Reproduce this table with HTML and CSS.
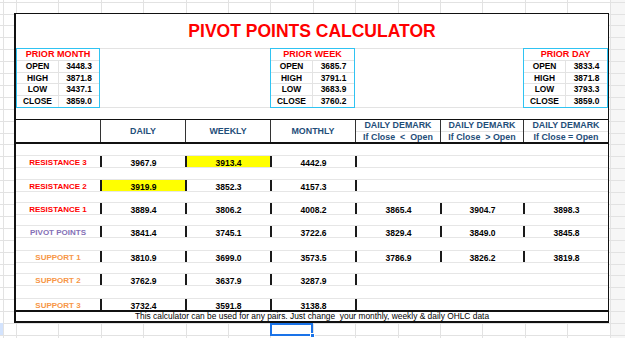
FILE: index.html
```html
<!DOCTYPE html>
<html>
<head>
<meta charset="utf-8">
<link rel="stylesheet" href="styles.css">
</head>
<body>
<div class="sheet">
  <div class="calc">
    <div class="title">PIVOT POINTS CALCULATOR</div>
    <div class="boxes">
      <div class="box box-month">
        <div class="box-h">PRIOR MONTH</div>
        <div class="box-l">OPEN</div><div class="box-v">3448.3</div>
        <div class="box-l">HIGH</div><div class="box-v">3871.8</div>
        <div class="box-l">LOW</div><div class="box-v">3437.1</div>
        <div class="box-l">CLOSE</div><div class="box-v">3859.0</div>
      </div>
      <div class="box box-week">
        <div class="box-h">PRIOR WEEK</div>
        <div class="box-l">OPEN</div><div class="box-v">3685.7</div>
        <div class="box-l">HIGH</div><div class="box-v">3791.1</div>
        <div class="box-l">LOW</div><div class="box-v">3683.9</div>
        <div class="box-l">CLOSE</div><div class="box-v">3760.2</div>
      </div>
      <div class="box box-day">
        <div class="box-h">PRIOR DAY</div>
        <div class="box-l">OPEN</div><div class="box-v">3833.4</div>
        <div class="box-l">HIGH</div><div class="box-v">3871.8</div>
        <div class="box-l">LOW</div><div class="box-v">3793.3</div>
        <div class="box-l">CLOSE</div><div class="box-v">3859.0</div>
      </div>
    </div>
    <div class="gap"></div>
    <div class="head">
      <div class="hc hc-first"></div>
      <div class="hc">DAILY</div>
      <div class="hc">WEEKLY</div>
      <div class="hc">MONTHLY</div>
      <div class="hc dm"><span class="dm-a">DAILY DEMARK</span><span class="dm-b">If Close  &lt;  Open</span></div>
      <div class="hc dm"><span class="dm-a">DAILY DEMARK</span><span class="dm-b">If Close  &gt; Open</span></div>
      <div class="hc dm"><span class="dm-a">DAILY DEMARK</span><span class="dm-b">If Close = Open</span></div>
    </div>
    <div class="row h11 first"></div>
    <div class="row h12">
      <div class="lbl red">RESISTANCE 3</div>
      <div class="c">3967.9</div>
      <div class="c hl">3913.4</div>
      <div class="c">4442.9</div>
      <div class="c rest"></div>
    </div>
    <div class="row h12"></div>
    <div class="row h12">
      <div class="lbl red">RESISTANCE 2</div>
      <div class="c hl">3919.9</div>
      <div class="c">3852.3</div>
      <div class="c">4157.3</div>
      <div class="c rest"></div>
    </div>
    <div class="row h11"></div>
    <div class="row h12">
      <div class="lbl red">RESISTANCE 1</div>
      <div class="c">3889.4</div>
      <div class="c">3806.2</div>
      <div class="c">4008.2</div>
      <div class="c">3865.4</div>
      <div class="c">3904.7</div>
      <div class="c">3898.3</div>
    </div>
    <div class="row h11"></div>
    <div class="row h12">
      <div class="lbl purple">PIVOT POINTS</div>
      <div class="c">3841.4</div>
      <div class="c">3745.1</div>
      <div class="c">3722.6</div>
      <div class="c">3829.4</div>
      <div class="c">3849.0</div>
      <div class="c">3845.8</div>
    </div>
    <div class="row h13"></div>
    <div class="row h12">
      <div class="lbl orange">SUPPORT 1</div>
      <div class="c">3810.9</div>
      <div class="c">3699.0</div>
      <div class="c">3573.5</div>
      <div class="c">3786.9</div>
      <div class="c">3826.2</div>
      <div class="c">3819.8</div>
    </div>
    <div class="row h11"></div>
    <div class="row h12">
      <div class="lbl orange">SUPPORT 2</div>
      <div class="c">3762.9</div>
      <div class="c">3637.9</div>
      <div class="c">3287.9</div>
      <div class="c rest"></div>
    </div>
    <div class="row h13"></div>
    <div class="row h12">
      <div class="lbl orange">SUPPORT 3</div>
      <div class="c">3732.4</div>
      <div class="c">3591.8</div>
      <div class="c">3138.8</div>
      <div class="c rest"></div>
    </div>
    <div class="foot">This calculator can be used for any pairs. Just change  your monthly, weekly &amp; daily OHLC data</div>
  </div>
  <div class="rowsel"></div>
  <div class="sel"><div class="dot"></div></div>
</div>
</body>
</html>
```
FILE: styles.css
```css
* { box-sizing: border-box; }
html, body { margin: 0; padding: 0; }
body {
  width: 625px;
  height: 338px;
  overflow: hidden;
  background: #fff;
  font-family: "Liberation Sans", Arial, sans-serif;
  color: #000;
}

.sheet {
  position: relative;
  width: 625px;
  height: 338px;
  overflow: hidden;
  padding: 13px 0 0 14px;
  background-color: #fff;
  background-image:
    linear-gradient(#e2e2e2, #e2e2e2),
    repeating-linear-gradient(90deg, transparent 0 16px, #e2e2e2 16px 17px, transparent 17px 42.4px),
    repeating-linear-gradient(180deg, transparent 0 1.7px, #e2e2e2 1.7px 2.7px, transparent 2.7px 11.9px),
    linear-gradient(#f6f6f6, #f6f6f6);
  background-position: 3px 0, 0 0, 0 0, 611px 0;
  background-size: 1px 100%, 100% 100%, 100% 100%, 14px 100%;
  background-repeat: no-repeat;
}

.calc {
  width: 595px;
  background: #fff;
  border-left: 2px solid #111;
  border-top: 1px solid #111;
  border-right: 1px solid #111;
  border-bottom: 2px solid #111;
}

.title {
  height: 34px;
  display: flex;
  align-items: center;
  justify-content: center;
  color: #ff0000;
  font-weight: bold;
  font-size: 17.5px;
}

.boxes, .head, .row {
  display: grid;
  grid-template-columns: 84px 85px 85px 85px 85px 83px 85px;
}

.boxes {
  height: 60px;
  background:
    linear-gradient(#e3e3e3, #e3e3e3) 0 0 / 100% 1px no-repeat,
    linear-gradient(#e3e3e3, #e3e3e3) 0 100% / 100% 1px no-repeat;
}

.box {
  border: 1px solid #2fc3f2;
  display: grid;
  grid-template-columns: 41px 1fr;
  grid-template-rows: 11px 12px 11px 12px 12px;
  font-weight: bold;
}
.box-month { grid-column: 1; }
.box-week { grid-column: 4; }
.box-day { grid-column: 7; }

.box-h {
  grid-column: 1 / -1;
  color: #ff0000;
  font-size: 9.1px;
  display: flex;
  align-items: center;
  justify-content: center;
  line-height: 1;
}
.box-l, .box-v {
  border-top: 1px solid #e3e3e3;
  font-size: 8.4px;
  display: flex;
  align-items: center;
  justify-content: center;
  line-height: 1;
}
.box-v { border-left: 1px solid #e3e3e3; }

.gap { height: 11px; }

.head {
  height: 25px;
  border-top: 1px solid #111;
  border-bottom: 2px solid #111;
}
.hc {
  border-left: 1px solid #333;
  color: #1f4e79;
  font-weight: bold;
  font-size: 8.9px;
  display: flex;
  align-items: center;
  justify-content: center;
  line-height: 1;
}
.hc-first { border-left: 0; }
.dm {
  flex-direction: column;
  align-items: stretch;
}
.dm span {
  display: flex;
  align-items: center;
  justify-content: center;
  height: 11px;
  white-space: pre;
}
.dm .dm-b { border-top: 1px solid #e3e3e3; }

.row { border-top: 1px solid #e6e6e6; }
.row.first { border-top: 0; }
.h11 { height: 11px; }
.h12 { height: 12px; }
.h13 { height: 13px; }

.lbl, .c {
  display: flex;
  align-items: flex-end;
  justify-content: center;
  font-weight: bold;
  line-height: 1;
}
.lbl { font-size: 8px; }
.c {
  font-size: 8.5px;
  border-left: 2px solid #1a1a1a;
}
.c.rest { grid-column: 5 / -1; }
.c.hl { background: #ffff00; }

.red { color: #ff0000; }
.purple { color: #8470b6; }
.orange { color: #f79646; }

.foot {
  height: 11px;
  border-top: 2px solid #111;
  font-size: 8.4px;
  line-height: 1;
  display: flex;
  align-items: center;
  justify-content: center;
  white-space: pre;
}

.rowsel {
  position: absolute;
  left: 0;
  top: 323px;
  width: 3px;
  height: 12px;
  background: #d3e3fd;
}
.sel {
  position: absolute;
  left: 270px;
  top: 323px;
  width: 43px;
  height: 13px;
  border: 2px solid #1a73e8;
}
.dot {
  position: absolute;
  right: -4px;
  bottom: -4px;
  width: 5px;
  height: 5px;
  background: #1a73e8;
  border: 1px solid #fff;
}
```
